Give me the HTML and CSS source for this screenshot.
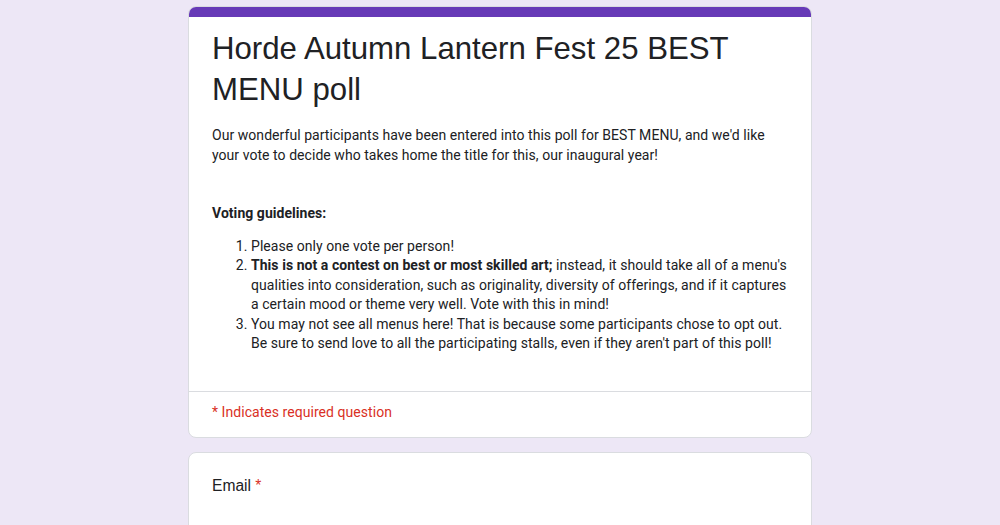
FILE: index.html
```html
<!DOCTYPE html>
<html lang="en">
<head>
<meta charset="utf-8">
<title>Horde Autumn Lantern Fest 25 BEST MENU poll</title>
<link rel="stylesheet" href="styles.css">
</head>
<body>
<main class="page">
  <section class="card header-card">
    <div class="accent"></div>
    <div class="header-body">
      <h1 class="form-title">Horde Autumn Lantern Fest 25 BEST MENU poll</h1>
      <div class="form-desc">
        <p class="desc-line">Our wonderful participants have been entered into this poll for BEST MENU, and we'd like your vote to decide who takes home the title for this, our inaugural year!</p>
        <p class="desc-line blank">&nbsp;</p>
        <p class="desc-line blank">&nbsp;</p>
        <p class="desc-line"><b>Voting guidelines:</b></p>
        <ol class="guidelines">
          <li>Please only one vote per person!</li>
          <li><b>This is not a contest on best or most skilled art;</b> instead, it should take all of a menu's qualities into consideration, such as originality, diversity of offerings, and if it captures a certain mood or theme very well. Vote with this in mind!</li>
          <li>You may not see all menus here! That is because some participants chose to opt out. Be sure to send love to all the participating stalls, even if they aren't part of this poll!</li>
        </ol>
      </div>
    </div>
    <div class="required-note">* Indicates required question</div>
  </section>
  <section class="card question-card">
    <div class="question-title">Email <span class="req">*</span></div>
  </section>
</main>
</body>
</html>
```
FILE: styles.css
```css
html, body {
  margin: 0;
  padding: 0;
}
body {
  background: #ede7f6;
  color: #202124;
  font-family: Roboto, "Noto Sans", Arial, sans-serif;
}
.page {
  width: 624px;
  margin: 0 auto;
  padding-top: 6px;
  display: flex;
  flex-direction: column;
  gap: 14px;
}
.card {
  background: #fff;
  border: 1px solid #dadce0;
  border-radius: 8px;
  overflow: hidden;
}
.accent {
  height: 10px;
  background: #673ab7;
}
.header-body {
  padding: 11px 23px 24px;
}
.form-title {
  margin: 0;
  font-family: "Liberation Sans", Arial, sans-serif;
  font-weight: 400;
  font-size: 31.2px;
  line-height: 41px;
  color: #202124;
}
.form-desc {
  margin-top: 16px;
  font-size: 14px;
  letter-spacing: 0.05px;
  line-height: 19.5px;
  color: #202124;
}
.desc-line {
  margin: 0;
}
.desc-line b, .guidelines b {
  font-weight: 700;
}
.guidelines {
  margin: 13px 0 13px;
  padding-left: 39px;
}
.required-note {
  border-top: 1px solid #dadce0;
  padding: 11.5px 23px 14px;
  font-size: 14px;
  letter-spacing: 0.05px;
  line-height: 19.5px;
  color: #d93025;
}
.question-card {
  padding: 21px 23px 100px;
}
.question-title {
  font-family: "Liberation Sans", Arial, sans-serif;
  font-size: 15.6px;
  line-height: 23.4px;
  color: #202124;
}
.req {
  color: #d93025;
}
```
